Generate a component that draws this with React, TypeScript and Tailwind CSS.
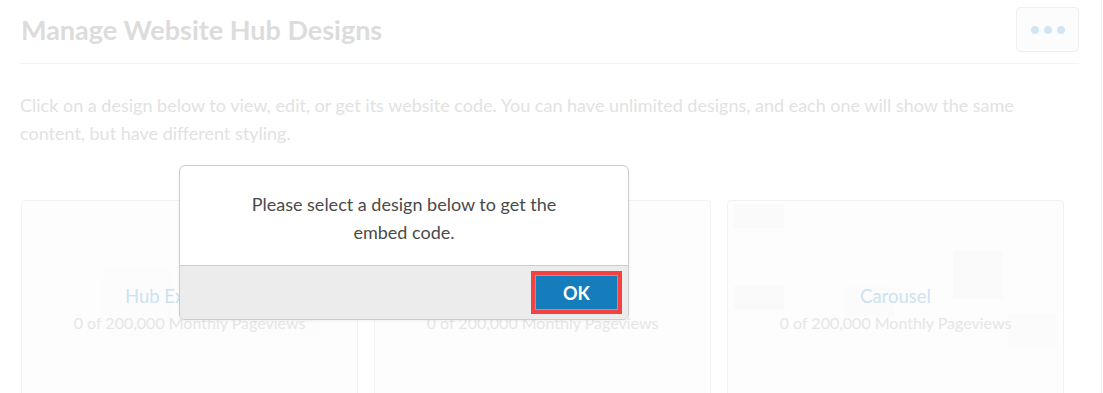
import React from "react";

function Card({ title, children }: { title: string; children?: React.ReactNode }) {
  return (
    <div className="relative h-[250px] rounded-[4px] border border-[#f2f2f2] bg-[#fdfdfd] overflow-hidden">
      {children}
      <div className="absolute inset-x-0 top-[82px] flex flex-col items-center">
        <div className="text-[18.5px] leading-[26px] text-[#cde2f1]">{title}</div>
        <div className="mt-[3px] text-[16px] leading-[22px] text-[#e6e6e6]">0 of 200,000 Monthly Pageviews</div>
      </div>
    </div>
  );
}

export default function App() {
  return (
    <div
      className="relative w-[1103px] h-[393px] overflow-hidden bg-white"
      style={{ fontFamily: "Lato, 'Open Sans', sans-serif" }}
    >
      <div className="absolute right-[1px] top-0 bottom-0 w-px bg-[#f2f2f2]" />
      <div className="px-[21px] pt-[7px] w-[1100px]">
        <div className="flex items-center justify-between h-[45px]">
          <h1 className="text-[27px] font-bold leading-none text-[#dcdcdc]">Manage Website Hub Designs</h1>
          <button className="w-[63px] h-[45px] rounded-[4px] border border-[#efefef] bg-[#fcfcfc] flex items-center justify-center gap-[5px]">
            <span className="w-[8px] h-[8px] rounded-full bg-[#d3e6f3]" />
            <span className="w-[8px] h-[8px] rounded-full bg-[#d3e6f3]" />
            <span className="w-[8px] h-[8px] rounded-full bg-[#d3e6f3]" />
          </button>
        </div>
        <div className="mt-[11px] -ml-px border-t border-[#f3f3f3]" />
        <p className="mt-[27px] -ml-px text-[18px] leading-[28px] text-[#e2e2e2]">
          Click on a design below to view, edit, or get its website code. You can have unlimited designs, and each one will show the same content, but have different styling.
        </p>
        <div className="mt-[53px] grid grid-cols-[337px_337px_337px] gap-[16px]">
          <Card title="Hub Experience">
            <div className="absolute left-[80px] top-[65px] w-[70px] h-[70px] rounded-[12px] bg-[#fcfcfc]" />
            <div className="absolute left-[228px] top-[65px] w-[70px] h-[70px] rounded-[12px] bg-[#fcfcfc]" />
          </Card>
          <Card title="Masonry" />
          <Card title="Carousel">
            <div className="absolute left-[6px] top-[3px] w-[50px] h-[24px] bg-[#fafafa]" />
            <div className="absolute left-[6px] top-[85px] w-[50px] h-[24px] bg-[#fafafa]" />
            <div className="absolute left-[225px] top-[50px] w-[50px] h-[48px] bg-[#fafafa]" />
            <div className="absolute left-[280px] top-[113px] w-[50px] h-[34px] bg-[#fbfbfb]" />
            <div className="absolute left-[116px] top-[86px] w-[50px] h-[30px] bg-[#fbfbfb]" />
          </Card>
        </div>
      </div>

      <div className="absolute left-[179px] top-[165px] w-[450px] rounded-[6px] border border-[#cccccc] bg-white overflow-hidden shadow-[0_1px_3px_rgba(0,0,0,0.06)]">
        <div className="h-[99px] px-[66px] pt-[24px] text-center text-[18px] leading-[28px] text-[#4a4a4a]">
          Please select a design below to get the embed code.
        </div>
        <div className="h-[54px] border-t border-[#cccccc] bg-[#ececec] flex items-center justify-end pr-[6px]">
          <div className="border-[4px] border-[#f44242] p-px bg-[#6aa9d6]">
            <button className="w-[81px] h-[33px] bg-[#167dbd] text-white text-[18px] font-bold leading-none">OK</button>
          </div>
        </div>
      </div>
    </div>
  );
}
